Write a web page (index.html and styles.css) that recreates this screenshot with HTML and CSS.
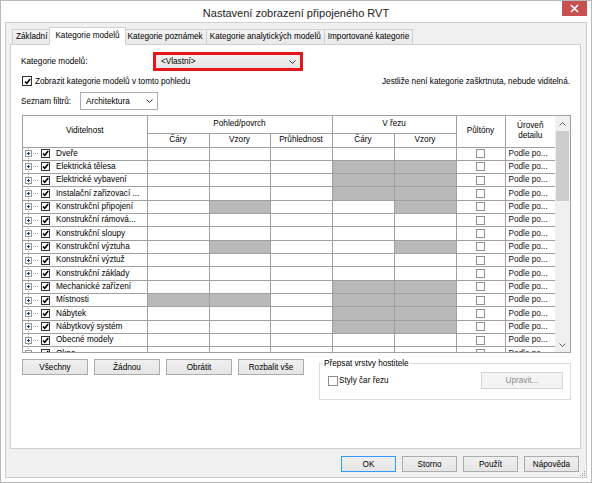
FILE: index.html
```html
<!DOCTYPE html>
<html lang="cs">
<head>
  <meta charset="UTF-8" />
  <title>Nastavení zobrazení připojeného RVT</title>
  <link rel="stylesheet" href="styles.css">
</head>
<body>
<div class="window">
  <div class="titlebar">
    <span class="title">Nastavení zobrazení připojeného RVT</span>
    <div class="close">
      <svg width="9" height="9" viewBox="0 0 9 9"><path d="M1 1l7 7M8 1l-7 7" stroke="#fff" stroke-width="1.6"/></svg>
    </div>
  </div>

  <div class="client">
    <div class="tabs">
      <div class="tab">Základní</div>
      <div class="tab active">Kategorie modelů</div>
      <div class="tab">Kategorie poznámek</div>
      <div class="tab">Kategorie analytických modelů</div>
      <div class="tab">Importované kategorie</div>
    </div>

    <div class="panel">
      <div class="row-model">
        <span class="label">Kategorie modelů:</span>
        <div class="highlight">
          <div class="combo grey">
            <span>&lt;Vlastní&gt;</span>
            <svg class="chev" width="7" height="4" viewBox="0 0 7 4"><path d="M.5 .5l3 3 3-3" stroke="#333" fill="none"/></svg>
          </div>
        </div>
      </div>

      <div class="row-show">
        <span class="cb on"></span>
        <span class="show-text">Zobrazit kategorie modelů v tomto pohledu</span>
        <span class="note">Jestliže není kategorie zaškrtnuta, nebude viditelná.</span>
      </div>

      <div class="row-filter">
        <span class="label">Seznam filtrů:</span>
        <div class="combo white">
          <span>Architektura</span>
          <svg class="chev" width="7" height="4" viewBox="0 0 7 4"><path d="M.5 .5l3 3 3-3" stroke="#333" fill="none"/></svg>
        </div>
      </div>

      <div class="grid">
        <table>
          <colgroup>
            <col class="c-name"><col class="c-62"><col class="c-61"><col class="c-62">
            <col class="c-62"><col class="c-62"><col class="c-49"><col class="c-50">
          </colgroup>
          <thead>
            <tr class="h1">
              <th rowspan="2">Viditelnost</th>
              <th colspan="3">Pohled/povrch</th>
              <th colspan="2">V řezu</th>
              <th rowspan="2">Půltóny</th>
              <th rowspan="2" class="detail">Úroveň<br>detailu</th>
            </tr>
            <tr class="h2">
              <th>Čáry</th><th>Vzory</th><th>Průhlednost</th>
              <th>Čáry</th><th>Vzory</th>
            </tr>
          </thead>
          <tbody>
            <tr><td class="name"><div class="node"><span class="exp"><span class="plus"></span></span><span class="dots"></span><span class="cb on"></span><span class="txt">Dveře</span></div></td>
              <td></td><td></td><td></td><td></td><td></td><td class="half"><span class="cb"></span></td><td class="lvl">Podle po...</td></tr>
            <tr><td class="name"><div class="node"><span class="exp"><span class="plus"></span></span><span class="dots"></span><span class="cb on"></span><span class="txt">Elektrická tělesa</span></div></td>
              <td></td><td></td><td></td><td class="hatch"></td><td class="hatch"></td><td class="half"><span class="cb"></span></td><td class="lvl">Podle po...</td></tr>
            <tr><td class="name"><div class="node"><span class="exp"><span class="plus"></span></span><span class="dots"></span><span class="cb on"></span><span class="txt">Elektrické vybavení</span></div></td>
              <td></td><td></td><td></td><td class="hatch"></td><td class="hatch"></td><td class="half"><span class="cb"></span></td><td class="lvl">Podle po...</td></tr>
            <tr><td class="name"><div class="node"><span class="exp"><span class="plus"></span></span><span class="dots"></span><span class="cb on"></span><span class="txt">Instalační zařizovací ...</span></div></td>
              <td></td><td></td><td></td><td class="hatch"></td><td class="hatch"></td><td class="half"><span class="cb"></span></td><td class="lvl">Podle po...</td></tr>
            <tr><td class="name"><div class="node"><span class="exp"><span class="plus"></span></span><span class="dots"></span><span class="cb on"></span><span class="txt">Konstrukční připojení</span></div></td>
              <td></td><td class="hatch"></td><td></td><td></td><td class="hatch"></td><td class="half"><span class="cb"></span></td><td class="lvl">Podle po...</td></tr>
            <tr><td class="name"><div class="node"><span class="exp"><span class="plus"></span></span><span class="dots"></span><span class="cb on"></span><span class="txt">Konstrukční rámová...</span></div></td>
              <td></td><td></td><td></td><td></td><td></td><td class="half"><span class="cb"></span></td><td class="lvl">Podle po...</td></tr>
            <tr><td class="name"><div class="node"><span class="exp"><span class="plus"></span></span><span class="dots"></span><span class="cb on"></span><span class="txt">Konstrukční sloupy</span></div></td>
              <td></td><td></td><td></td><td></td><td></td><td class="half"><span class="cb"></span></td><td class="lvl">Podle po...</td></tr>
            <tr><td class="name"><div class="node"><span class="exp"><span class="plus"></span></span><span class="dots"></span><span class="cb on"></span><span class="txt">Konstrukční výztuha</span></div></td>
              <td></td><td class="hatch"></td><td></td><td></td><td class="hatch"></td><td class="half"><span class="cb"></span></td><td class="lvl">Podle po...</td></tr>
            <tr><td class="name"><div class="node"><span class="exp"><span class="plus"></span></span><span class="dots"></span><span class="cb on"></span><span class="txt">Konstrukční výztuž</span></div></td>
              <td></td><td></td><td></td><td></td><td></td><td class="half"><span class="cb"></span></td><td class="lvl">Podle po...</td></tr>
            <tr><td class="name"><div class="node"><span class="exp"><span class="plus"></span></span><span class="dots"></span><span class="cb on"></span><span class="txt">Konstrukční základy</span></div></td>
              <td></td><td></td><td></td><td></td><td></td><td class="half"><span class="cb"></span></td><td class="lvl">Podle po...</td></tr>
            <tr><td class="name"><div class="node"><span class="exp"><span class="plus"></span></span><span class="dots"></span><span class="cb on"></span><span class="txt">Mechanické zařízení</span></div></td>
              <td></td><td></td><td></td><td class="hatch"></td><td class="hatch"></td><td class="half"><span class="cb"></span></td><td class="lvl">Podle po...</td></tr>
            <tr><td class="name"><div class="node"><span class="exp"><span class="plus"></span></span><span class="dots"></span><span class="cb on"></span><span class="txt">Místnosti</span></div></td>
              <td class="hatch"></td><td class="hatch"></td><td></td><td class="hatch"></td><td class="hatch"></td><td class="half"><span class="cb"></span></td><td class="lvl">Podle po...</td></tr>
            <tr><td class="name"><div class="node"><span class="exp"><span class="plus"></span></span><span class="dots"></span><span class="cb on"></span><span class="txt">Nábytek</span></div></td>
              <td></td><td></td><td></td><td class="hatch"></td><td class="hatch"></td><td class="half"><span class="cb"></span></td><td class="lvl">Podle po...</td></tr>
            <tr><td class="name"><div class="node"><span class="exp"><span class="plus"></span></span><span class="dots"></span><span class="cb on"></span><span class="txt">Nábytkový systém</span></div></td>
              <td></td><td></td><td></td><td class="hatch"></td><td class="hatch"></td><td class="half"><span class="cb"></span></td><td class="lvl">Podle po...</td></tr>
            <tr><td class="name"><div class="node"><span class="exp"><span class="plus"></span></span><span class="dots"></span><span class="cb on"></span><span class="txt">Obecné modely</span></div></td>
              <td></td><td></td><td></td><td></td><td></td><td class="half"><span class="cb"></span></td><td class="lvl">Podle po...</td></tr>
            <tr><td class="name"><div class="node"><span class="exp"><span class="plus"></span></span><span class="dots"></span><span class="cb on"></span><span class="txt">Okna</span></div></td>
              <td></td><td></td><td></td><td></td><td></td><td class="half"><span class="cb"></span></td><td class="lvl">Podle po...</td></tr>
          </tbody>
        </table>
        <div class="vscroll">
          <div class="arrow"><svg width="7" height="4" viewBox="0 0 7 4"><path d="M.5 3.5l3-3 3 3" stroke="#606060" fill="none"/></svg></div>
          <div class="thumb"></div>
          <div class="track"></div>
          <div class="arrow"><svg width="7" height="4" viewBox="0 0 7 4"><path d="M.5 .5l3 3 3-3" stroke="#606060" fill="none"/></svg></div>
        </div>
      </div>

      <div class="row-bottom">
        <button class="btn">Všechny</button>
        <button class="btn">Žádnou</button>
        <button class="btn">Obrátit</button>
        <button class="btn">Rozbalit vše</button>
        <fieldset class="group">
          <legend>Přepsat vrstvy hostitele</legend>
          <div class="group-row">
            <span class="cb big"></span>
            <span>Styly čar řezu</span>
            <button class="btn disabled">Upravit...</button>
          </div>
        </fieldset>
      </div>
    </div>

    <div class="footer">
      <button class="btn ok">OK</button>
      <button class="btn">Storno</button>
      <button class="btn">Použít</button>
      <button class="btn">Nápověda</button>
      <svg class="grip" width="7" height="7" viewBox="0 0 7 7">
        <rect x="5" y="1" width="1" height="1" fill="#999"/>
        <rect x="3" y="3" width="1" height="1" fill="#999"/><rect x="5" y="3" width="1" height="1" fill="#999"/>
        <rect x="1" y="5" width="1" height="1" fill="#999"/><rect x="3" y="5" width="1" height="1" fill="#999"/><rect x="5" y="5" width="1" height="1" fill="#999"/>
      </svg>
    </div>
  </div>
</div>
</body>
</html>
```

FILE: styles.css
```css
:root {
  --frame: #b9b9b9;
  --face: #f0f0f0;
  --panel-line: #d0d0d0;
  --grid-line: #a0a0a0;
  --btn-line: #acacac;
  --text: #000;
}

* {
  box-sizing: border-box;
}

body {
  margin: 0;
  background: #fff;
  font-family: "Liberation Sans", Arial, sans-serif;
  font-size: 8.2px;
  color: var(--text);
}

.window {
  width: 592px;
  height: 483px;
  border: 1px solid var(--frame);
  background: #fff;
  padding: 0 4px 4px;
  display: flex;
  flex-direction: column;
}

/* title bar */
.titlebar {
  height: 21px;
  display: flex;
  align-items: center;
  justify-content: center;
  position: relative;
}

.title {
  font-size: 11px;
  color: #222;
  padding-top: 3px;
}

.close {
  position: absolute;
  right: 0;
  top: 0;
  width: 25px;
  height: 15px;
  background: #c75050;
  display: flex;
  align-items: center;
  justify-content: center;
}

/* client area */
.client {
  flex: 1;
  border: 1px solid #cfcfcf;
  background: var(--face);
  padding: 4px 5px 0 4px;
  display: flex;
  flex-direction: column;
}

.tabs {
  display: flex;
  align-items: flex-end;
  height: 18px;
  margin-bottom: -1px;
  padding-left: 2px;
  position: relative;
  z-index: 1;
}

.tab {
  height: 16px;
  line-height: 14px;
  padding: 0 3px;
  border: 1px solid var(--panel-line);
  border-left: none;
  background: linear-gradient(#f3f3f3, #e9e9e9);
  white-space: nowrap;
}

.tab:first-child {
  border-left: 1px solid var(--panel-line);
}

.tab.active {
  height: 18px;
  line-height: 16px;
  background: #fff;
  border-left: 1px solid var(--panel-line);
  border-bottom-color: #fff;
  margin: 0 -1px 0 -2px;
  padding: 0 5px;
  position: relative;
}

.panel {
  height: 405px;
  background: #fff;
  border: 1px solid var(--panel-line);
  padding: 0 9px 0 11px;
}

.label {
  margin-left: -1px;
}

/* top rows */
.row-model {
  margin-top: 7px;
  height: 19px;
  display: flex;
  align-items: center;
}

.row-model .label {
  width: 132px;
}

.highlight {
  width: 150px;
  height: 19px;
  border: 3px solid #e8141b;
}

.combo {
  height: 100%;
  display: flex;
  align-items: center;
  justify-content: space-between;
  padding: 0 4px 0 5px;
}

.combo.grey {
  background: linear-gradient(#f2f2f2, #e4e4e4);
}

.combo.white {
  width: 78px;
  height: 18px;
  background: #fff;
  border: 1px solid var(--btn-line);
}

.row-show {
  margin-top: 4px;
  height: 12px;
  display: flex;
  align-items: center;
}

.show-text {
  margin-left: 3px;
}

.note {
  margin-left: auto;
  margin-right: 1px;
}

.row-filter {
  margin-top: 5px;
  height: 18px;
  display: flex;
  align-items: center;
}

.row-filter .label {
  width: 59px;
}

/* checkboxes */
.cb {
  display: inline-block;
  width: 9px;
  height: 9px;
  border: 1px solid #8f8f8f;
  background: #fff;
  flex: none;
}

.cb.on {
  border-color: #333;
  background: #fff url("data:image/svg+xml;utf8,<svg xmlns='http://www.w3.org/2000/svg' width='7' height='7' viewBox='0 0 7 7'><path d='M1 3.4l1.8 1.9L6.2 1' stroke='black' stroke-width='1.5' fill='none'/></svg>") center / 7px 7px no-repeat;
}

.row-show .cb {
  width: 10px;
  height: 10px;
}

/* grid */
.grid {
  margin-top: 5px;
  height: 238px;
  border: 1px solid var(--grid-line);
  display: flex;
  overflow: hidden;
}

table {
  width: 532px;
  table-layout: fixed;
  border-collapse: collapse;
  border-style: hidden;
  flex: none;
  align-self: flex-start;
}

.c-name { width: 124px; }
.c-62 { width: 62px; }
.c-61 { width: 61px; }
.c-49 { width: 49px; }
.c-50 { width: 50px; }

th,
td {
  border: 1px solid var(--grid-line);
  padding: 0;
  font-weight: normal;
  white-space: nowrap;
  overflow: hidden;
  line-height: 10px;
}

th {
  text-align: center;
}

tr.h1 {
  height: 17px;
}

tr.h2 {
  height: 14px;
}

tbody tr {
  height: 13.33px;
}

.node {
  height: 12px;
  display: flex;
  align-items: center;
  padding-left: 2px;
}

.exp {
  width: 7px;
  height: 100%;
  display: flex;
  align-items: center;
  background: repeating-linear-gradient(#a0a0a0 0 1px, transparent 1px 2px) 3px 0 / 1px 100% no-repeat;
}

.plus {
  width: 7px;
  height: 7px;
  border: 1px solid #9a9a9a;
  background:
    linear-gradient(#1e3a8a, #1e3a8a) center / 3px 1px no-repeat,
    linear-gradient(#1e3a8a, #1e3a8a) center / 1px 3px no-repeat,
    #f6f6f6;
}

.dots {
  width: 6px;
  height: 1px;
  margin: 0 2px 0 1px;
  background: repeating-linear-gradient(90deg, #a0a0a0 0 1px, transparent 1px 2px);
}

.txt {
  margin-left: 6px;
}

td.hatch {
  background: #eaeaea url("data:image/svg+xml;utf8,<svg xmlns='http://www.w3.org/2000/svg' width='2' height='2' shape-rendering='crispEdges'><rect width='1' height='1' fill='%23b9b9b9'/><rect x='1' y='1' width='1' height='1' fill='%23b9b9b9'/></svg>") 0 0 / 2px 2px repeat;
}

td.half {
  text-align: center;
  line-height: 0;
}

td.lvl {
  padding-left: 3px;
  color: #111;
}

.vscroll {
  width: 15px;
  flex: none;
  display: flex;
  flex-direction: column;
  background: var(--face);
}

.arrow {
  height: 15px;
  display: flex;
  align-items: center;
  justify-content: center;
}

.thumb {
  height: 70px;
  margin: 0 1px;
  background: #cdcdcd;
}

.track {
  flex: 1;
}

/* buttons */
.btn {
  font: inherit;
  color: #000;
  height: 16px;
  width: 66px;
  padding: 0;
  border: 1px solid var(--btn-line);
  background: linear-gradient(#f0f0f0, #e5e5e5);
}

.btn.disabled {
  width: 82px;
  height: 17px;
  color: #8a8a8a;
  background: #f4f4f4;
  border-color: #d5d5d5;
  margin-left: auto;
}

.row-bottom {
  margin-top: 6px;
  display: flex;
  align-items: flex-start;
  gap: 6px;
}

.group {
  margin: 0 0 0 auto;
  width: 252px;
  height: 41px;
  padding: 0 7px 0 8px;
  border: 1px solid #dcdcdc;
}

.group legend {
  padding: 0 1px;
  margin-left: -5px;
  line-height: 9px;
}

.group-row {
  display: flex;
  align-items: center;
  margin-top: 4px;
}

.cb.big {
  width: 10px;
  height: 10px;
  margin-right: 1px;
}

.footer {
  margin-top: 7px;
  display: flex;
  justify-content: flex-end;
  align-items: flex-start;
  gap: 6px;
}

.footer .btn {
  width: 55px;
}

.btn.ok {
  border-color: #3399ff;
}

.grip {
  margin: 14px -5px 0 -6px;
}
```
